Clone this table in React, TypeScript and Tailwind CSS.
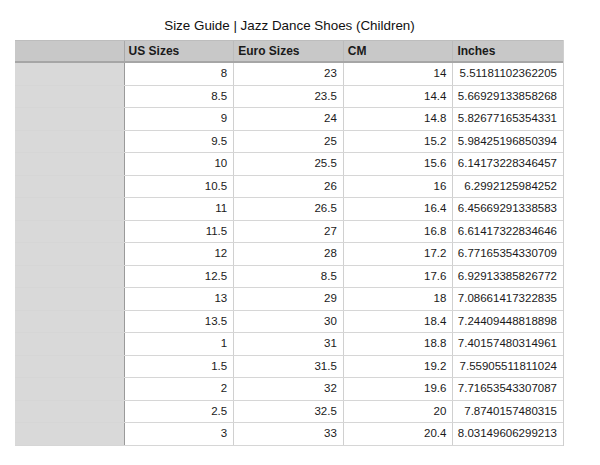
const ROWS: [string, string, string, string][] = [
  ["8", "23", "14", "5.51181102362205"],
  ["8.5", "23.5", "14.4", "5.66929133858268"],
  ["9", "24", "14.8", "5.82677165354331"],
  ["9.5", "25", "15.2", "5.98425196850394"],
  ["10", "25.5", "15.6", "6.14173228346457"],
  ["10.5", "26", "16", "6.2992125984252"],
  ["11", "26.5", "16.4", "6.45669291338583"],
  ["11.5", "27", "16.8", "6.61417322834646"],
  ["12", "28", "17.2", "6.77165354330709"],
  ["12.5", "8.5", "17.6", "6.92913385826772"],
  ["13", "29", "18", "7.08661417322835"],
  ["13.5", "30", "18.4", "7.24409448818898"],
  ["1", "31", "18.8", "7.40157480314961"],
  ["1.5", "31.5", "19.2", "7.55905511811024"],
  ["2", "32", "19.6", "7.71653543307087"],
  ["2.5", "32.5", "20", "7.8740157480315"],
  ["3", "33", "20.4", "8.03149606299213"],
];

const HEADERS = ["US Sizes", "Euro Sizes", "CM", "Inches"];

export default function App() {
  return (
    <div className="w-[600px] h-[465px] bg-white font-['Liberation_Sans',Arial,sans-serif] text-[#1a1a1a]">
      <h1 className="ml-[15px] w-[549px] pt-[17px] h-[40px] text-center text-[13.4px] leading-[18px] text-[#111]">
        Size Guide | Jazz Dance Shoes (Children)
      </h1>
      <div className="ml-[15px] w-[549px] border-r border-[#cfcfcf]">
        {/* Header */}
        <div className="grid grid-cols-5 h-[23px] bg-[#c8c8c8] border-t border-[#bdbdbd] border-b-2 border-b-[#a6a6a6]">
          <div className="border-r border-[#a8a8a8]" />
          {HEADERS.map((h, i) => (
            <div
              key={h}
              className={`flex items-center px-[4px] text-[12px] font-bold ${i < 3 ? "border-r border-[#bcbcbc]" : ""}`}
            >
              {h}
            </div>
          ))}
        </div>
        {/* Body */}
        {ROWS.map((r, ri) => (
          <div key={ri} className="grid grid-cols-5 h-[22.5px] border-b border-[#d6d6d6]">
            <div className="bg-[#d9d9d9] border-r border-[#9a9a9a]" />
            {r.map((c, ci) => (
              <div
                key={ci}
                className={`flex items-center justify-end px-[6px] text-[11.5px] ${ci < 3 ? "border-r border-[#d0d0d0]" : ""}`}
              >
                {c}
              </div>
            ))}
          </div>
        ))}
      </div>
    </div>
  );
}
